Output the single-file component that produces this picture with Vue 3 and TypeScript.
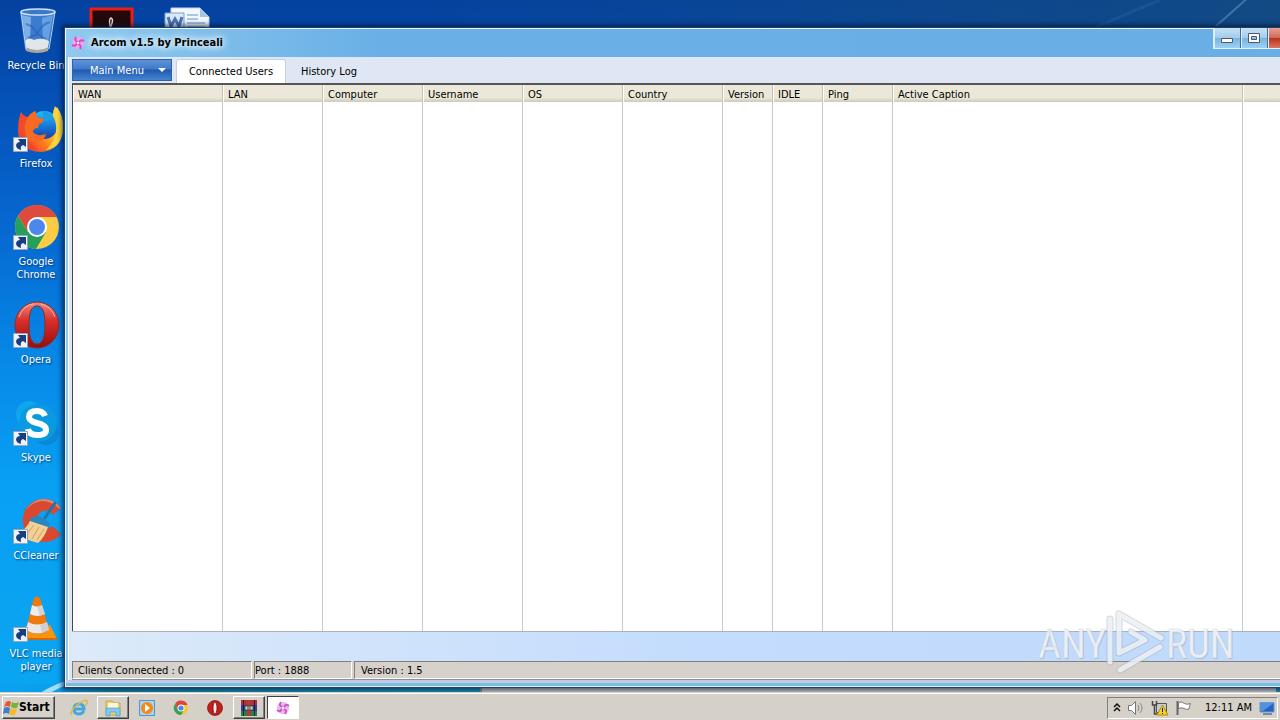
<script setup lang="ts">
import { ref } from 'vue'

interface Column { label: string; size: string }
interface Shortcut { id: string; label: string; linked: boolean }

const shortcuts: Shortcut[] = [
  { id: 'bin', label: 'Recycle Bin', linked: false },
  { id: 'firefox', label: 'Firefox', linked: true },
  { id: 'chrome', label: 'Google Chrome', linked: true },
  { id: 'opera', label: 'Opera', linked: true },
  { id: 'skype', label: 'Skype', linked: true },
  { id: 'ccleaner', label: 'CCleaner', linked: true },
  { id: 'vlc', label: 'VLC media player', linked: true },
]

const columns: Column[] = [
  { label: 'WAN', size: 'c150' },
  { label: 'LAN', size: 'c100' },
  { label: 'Computer', size: 'c100' },
  { label: 'Username', size: 'c100' },
  { label: 'OS', size: 'c100' },
  { label: 'Country', size: 'c100' },
  { label: 'Version', size: 'c50' },
  { label: 'IDLE', size: 'c50' },
  { label: 'Ping', size: 'c70' },
  { label: 'Active Caption', size: 'c350' },
  { label: '', size: 'rest' },
]

const tabs = ['Connected Users', 'History Log']
const activeTab = ref('Connected Users')
</script>

<template>
  <div class="screen">
    <main class="desktop">
      <svg class="streaks" viewBox="0 0 1280 692" preserveAspectRatio="none" aria-hidden="true">
        <path d="M1216 26 L1250 -4" stroke="#5f8fc0" stroke-width="2" opacity=".6" />
        <path d="M1090 30 Q1130 12 1160 0" stroke="#2c68ac" stroke-width="3" opacity=".35" fill="none" />
        <path d="M40 693 Q56 683 70 680 L70 684 Q58 688 50 693Z" fill="#c8efff" opacity=".8" />
      </svg>

      <nav class="icons" aria-label="Desktop">
        <div class="column">
          <button v-for="s in shortcuts" :key="s.id" class="shortcut" type="button">
            <span class="picture">
              <svg v-if="s.id === 'bin'" viewBox="0 0 48 48">
                <path d="M8 6 L43 7 L36 43 Q25 48 13 43Z" fill="#4f8fdc" opacity=".75" />
                <path d="M10 9 L19 11 L18 36 L14 38Z" fill="#a9d2f8" opacity=".6" />
                <path d="M30 12 L41 9 L36 36 L31 36Z" fill="#7db3ee" opacity=".65" />
                <path d="M14 18 Q22 20 25 28 Q30 18 38 16 M16 32 L25 28 L34 33" stroke="#2a61b4" stroke-width="2" fill="none" opacity=".6" />
                <path d="M13 35 Q17 31 22 34 Q29 31 37 35 L36 42 Q25 47 14 42Z" fill="#f2f2ec" opacity=".9" />
                <path d="M13 41 Q25 47 37 41 L36 45 Q25 49 14 45Z" fill="#aaa79c" />
                <ellipse cx="26" cy="6" rx="17" ry="3" fill="#3c78c4" stroke="#cfe2f6" stroke-width="1.500" />
                <path d="M9 6 L14 43 M43 6 L37 43" stroke="#b5d3f4" stroke-width="1" />
              </svg>

              <svg v-else-if="s.id === 'firefox'" viewBox="0 0 48 48">
                <defs>
                  <linearGradient id="ffbody" x1=".9" y1=".1" x2=".1" y2=".8">
                    <stop offset="0" stop-color="#fff04a" /><stop offset=".4" stop-color="#ffc02a" /><stop offset=".68" stop-color="#ff7a1c" /><stop offset="1" stop-color="#f03b30" />
                  </linearGradient>
                  <linearGradient id="ffglobe" x1="0" y1="0" x2="0" y2="1">
                    <stop offset="0" stop-color="#22c1f4" /><stop offset=".6" stop-color="#1670d6" /><stop offset="1" stop-color="#18439f" />
                  </linearGradient>
                </defs>
                <path d="M45 3 Q52 13 51 26 Q49 47 28 48 Q8 47 6 28 Q6 18 9 9 Q11 13 14 13 L38 14 Q42 9 45 3Z" fill="url(#ffbody)" />
                <circle cx="32" cy="21" r="14" fill="url(#ffglobe)" />
                <path d="M30 7 Q37 6 42 14 L33 17Z" fill="#1c9de4" />
                <path d="M43 2 Q52 11 51 26 Q49 43 34 46 Q43 38 44 27 Q45 19 41 12 Q41 6 43 2Z" fill="#ffd43c" />
                <path d="M9 8 Q11 13 16 13 Q19 8 24 7 Q23 12 27 14 L32 15 Q32 18 27 20 L26 24 Q21 24 21 28 Q25 33 34 30 Q33 38 24 37 Q15 37 10 29 Q5 20 9 8Z" fill="#f66a22" />
                <path d="M9 9 Q4 20 8 32 Q13 44 26 46 Q14 37 13 27 Q12 19 16 14Z" fill="#ef4130" opacity=".75" />
              </svg>

              <svg v-else-if="s.id === 'chrome'" viewBox="0 0 48 48">
                <circle cx="25" cy="25" r="22" fill="#fccc44" />
                <path d="M6 14 A22 22 0 0 1 45 15 L25 15 L16 30Z" fill="#dd4b3e" />
                <path d="M6 14 A22 22 0 0 0 24 47 L34 30 L16 30Z" fill="#25a05a" />
                <circle cx="25" cy="25" r="10" fill="#fff" />
                <circle cx="25" cy="25" r="8" fill="#4b87ed" />
              </svg>

              <svg v-else-if="s.id === 'opera'" viewBox="0 0 48 48">
                <defs><linearGradient id="op" x1="0" y1="0" x2="0" y2="1"><stop offset="0" stop-color="#f08a7c" /><stop offset=".4" stop-color="#d92f2c" /><stop offset="1" stop-color="#980c0c" /></linearGradient></defs>
                <path fill-rule="evenodd" d="M25 2 A22 23 0 1 0 25 48 A22 23 0 1 0 25 2Z M25 6 C31 6 33 13 33 25 C33 36 31 44 25 44 C19 44 17 36 17 25 C17 13 19 6 25 6Z" fill="url(#op)" stroke="#8e2a2a" stroke-width="1" />
                <path d="M7 17 Q11 5 22 4 M29 4 Q39 6 43 17" stroke="#f7b3a6" stroke-width="1" fill="none" />
              </svg>

              <svg v-else-if="s.id === 'skype'" viewBox="0 0 48 48">
                <circle cx="17" cy="16" r="13" fill="#10a6ec" />
                <circle cx="34" cy="34" r="13" fill="#0a88d6" />
                <circle cx="26" cy="25" r="19" fill="#0a9ae2" />
                <path d="M33 18 Q31 13 25 13 Q17 13 17 19 Q17 23 25 25 Q34 27 34 32 Q34 37 25 37 Q17 37 16 31" stroke="#fff" stroke-width="6" fill="none" />
              </svg>

              <svg v-else-if="s.id === 'ccleaner'" viewBox="0 0 48 48">
                <path d="M49 12 Q42 3 31 3 Q19 4 13 14 Q8 26 14 36 Q21 46 33 46 Q44 45 49 38 L40 30 Q35 35 29 32 Q23 28 25 21 Q29 13 36 15 Q39 16 41 19Z" fill="#d9492f" />
                <path d="M31 3 Q42 3 49 12 L47 13 Q40 5 30 5 Q20 6 14 14 Q20 4 31 3Z" fill="#ee8266" />
                <path d="M30 26 L43 7" stroke="#1f76ad" stroke-width="3" stroke-linecap="round" />
                <path d="M19 22 Q25 18 33 23 L38 28 L36 32 L17 26Z" fill="#2b86bd" />
                <path d="M18 25 L36 31 Q33 41 26 47 Q13 44 5 37 Q14 34 18 25Z" fill="#f3cf98" />
                <path d="M22 29 L14 39 M27 31 L20 43 M32 33 L25 44" stroke="#d59c5c" stroke-width="1" />
              </svg>

              <svg v-else viewBox="0 0 48 48">
                <path d="M14 32 L38 31 L45 45 L8 45Z" fill="#f7940f" />
                <path d="M8 44 L45 44 L45 46 L8 46Z" fill="#dc6805" />
                <path d="M22 4 Q25 1 28 4 L37 36 Q25 44 14 36Z" fill="#f27a0c" />
                <path d="M20 11 Q25 14 30 11 L33 20 Q25 24 18 20Z" fill="#ededed" />
                <path d="M16 28 Q25 33 35 28 L37 36 Q25 43 14 36Z" fill="#e8e8e8" />
                <path d="M25 12 L30 11 L33 20 L28 22Z M28 31 L35 28 L37 36 L30 39Z" fill="#bfc0c3" opacity=".6" />
              </svg>
              <svg v-if="s.linked" class="link-mark" viewBox="0 0 15 15" aria-hidden="true">
                <path d="M.5 .5h14v14H.5z" fill="#eef2fa" stroke="#9aa4b8" />
                <path d="M5 2h8v8l-3-2Q7 9 8 13Q3 12 3 8Q4 5 7 5Z" fill="#173f80" />
              </svg>
            </span>
            <span class="caption">{{ s.label }}</span>
          </button>
        </div>
        <div class="column">
          <button class="shortcut" type="button" aria-label="Acrobat Reader">
            <span class="picture">
              <svg viewBox="0 0 48 48"><path d="M4 3h41v44H4z" fill="#23090b" stroke="#ee1c12" stroke-width="3" /><path d="M24 24 Q21 13 24 12 Q27 13 24 20 Q20 28 14 32" stroke="#e8d8d8" stroke-width="1.500" fill="none" /></svg>
            </span>
          </button>
        </div>
        <div class="column">
          <button class="shortcut" type="button" aria-label="Document">
            <span class="picture">
              <svg viewBox="0 0 48 48"><path d="M9 2h29l9 9v37H9z" fill="#f4f8fd" stroke="#c3d4e8" /><path d="M38 2v9h9z" fill="#a9c4e3" /><path d="M25 9h11M25 13h11M25 17h18M25 21h18" stroke="#a9c6e8" stroke-width="2" /><path d="M3 7h19v18H3z" fill="#dce8f7" stroke="#7fa2d0" /><path d="M6 11l3 9 4-7 4 7 3-9" fill="none" stroke="#4a74b4" stroke-width="3" /></svg>
            </span>
          </button>
        </div>
      </nav>

      <div class="behind" aria-hidden="true"></div>

      <section class="window" aria-label="Arcom">
        <header class="titlebar">
          <svg class="app-icon" viewBox="0 0 14 14" aria-hidden="true">
            <circle cx="7" cy="7" r="6" fill="#f7a6ea" opacity=".75" />
            <path d="M7 6Q3 5 5 1M8 7Q9 3 13 5M7 8Q11 9 9 13M6 7Q5 11 1 9" fill="none" stroke="#ea3fc9" stroke-width="2" />
            <circle cx="7" cy="7" r="1.300" fill="#fff" />
          </svg>
          <h1>Arcom v1.5 by Princeali</h1>
          <div class="controls">
            <button type="button" class="min" aria-label="Minimize"><svg viewBox="0 0 14 14"><path d="M1.500 7.500h11v4h-11z" fill="#fff" stroke="#4b5872" /></svg></button>
            <button type="button" class="max" aria-label="Maximize"><svg viewBox="0 0 14 14"><path fill-rule="evenodd" d="M1.500 2.500h11v9h-11z M4.500 5.500v3h5v-3z" fill="#fff" stroke="#4b5872" /></svg></button>
            <button type="button" class="close" aria-label="Close"><svg viewBox="0 0 14 14"><path d="M3 3l8 8M11 3l-8 8" stroke="#fff" stroke-width="3" /></svg></button>
          </div>
        </header>

        <div class="client">
          <div class="toolbar">
            <button type="button" class="menu"><span>Main Menu</span><svg viewBox="0 0 8 4" aria-hidden="true"><path d="M0 0h8L4 4z" fill="#fff" /></svg></button>
            <div class="tabs" role="tablist">
              <button v-for="t in tabs" :key="t" type="button" role="tab" class="tab" :class="{ active: t === activeTab }" :aria-selected="t === activeTab" @click="activeTab = t">{{ t }}</button>
            </div>
          </div>

          <div class="list">
            <table>
              <colgroup><col v-for="(c, i) in columns" :key="i" :class="c.size" /></colgroup>
              <thead><tr><th v-for="(c, i) in columns" :key="i" scope="col">{{ c.label }}</th></tr></thead>
              <tbody><tr><td v-for="(c, i) in columns" :key="i"></td></tr></tbody>
            </table>
          </div>

          <div class="strip"></div>
          <footer class="status">
            <span class="clients">Clients Connected : 0</span>
            <span class="port">Port : 1888</span>
            <span class="version">Version : 1.5</span>
          </footer>
        </div>
      </section>

      <svg class="watermark" viewBox="0 0 200 64" aria-label="ANY RUN">
        <g class="wm-back"><text x="3" y="49">ANY</text><text x="131" y="49">RUN</text></g>
        <g class="wm-front"><text x="2" y="48">ANY</text><text x="130" y="48">RUN</text></g>
        <g fill="none" stroke-linejoin="round" stroke-linecap="round">
          <path d="M83 4L125 28M83 4V43L109 30L95 22M74 9V52M84 60L124 37" stroke="#9da8b8" stroke-opacity=".45" stroke-width="7" />
          <path d="M83 4L125 28M83 4V43L109 30L95 22M74 9V52M84 60L124 37" stroke="#f7f9fc" stroke-opacity=".75" stroke-width="5" />
        </g>
      </svg>
    </main>

    <footer class="taskbar">
      <button type="button" class="start">
        <svg viewBox="0 0 16 16" aria-hidden="true"><path d="M3 2Q6 0 8 2L7 7Q4 5 1 7Z" fill="#e9572c" /><path d="M9 2Q12 4 16 2L14 8Q11 9 8 7Z" fill="#76b63a" /><path d="M1 8Q4 6 7 8L6 14Q3 12 0 14Z" fill="#3b7fd4" /><path d="M8 8Q11 10 14 9L12 15Q9 16 6 14Z" fill="#f5b92b" /></svg>
        <span>Start</span>
      </button>
      <div class="tasks">
        <button type="button" class="task" aria-label="Internet Explorer">
          <svg viewBox="0 0 18 18"><path d="M14 12Q12 15 9 15Q4 15 4 10Q4 5 9 5Q14 5 14 10H5" fill="none" stroke="#43a7e4" stroke-width="3" /><path d="M2 16Q-1 13 7 6Q15 0 17 2Q18 4 15 7" fill="none" stroke="#e2b93b" stroke-width="1.500" /></svg>
        </button>
        <button type="button" class="task raised" aria-label="Explorer">
          <svg viewBox="0 0 18 18"><path d="M2 2h6l2 2h6v12H2z" fill="#ecd17b" stroke="#c9a64d" /><path d="M4 4h10v5H4z" fill="#fdf7d8" /><path d="M2 9h14v8h-4v-4H6v4H2z" fill="#80c8ee" stroke="#4c99c7" stroke-width=".6" /></svg>
        </button>
        <button type="button" class="task" aria-label="Media Player">
          <svg viewBox="0 0 18 18"><path d="M1.500 1.500h15v15h-15z" fill="#a9d3f1" stroke="#5096d2" /><circle cx="9" cy="9" r="6" fill="#f38a18" /><path d="M7 5l5 4-5 4z" fill="#fff" /></svg>
        </button>
        <button type="button" class="task" aria-label="Chrome">
          <svg viewBox="0 0 18 18"><circle cx="9" cy="9" r="7" fill="#f7c832" /><path d="M3 5A7 7 0 0 1 15.500 6H9L6 11Z" fill="#dc4636" /><path d="M3 5A7 7 0 0 0 9 16L12 11H6Z" fill="#35a25a" /><circle cx="9" cy="9" r="3.500" fill="#fff" /><circle cx="9" cy="9" r="2.600" fill="#4c86e6" /></svg>
        </button>
        <button type="button" class="task" aria-label="Opera">
          <svg viewBox="0 0 18 18"><circle cx="9" cy="9" r="7.500" fill="#c51c1c" stroke="#761010" stroke-width=".7" /><ellipse cx="9" cy="9" rx="2" ry="6" fill="#f5e9e5" stroke="#6d0b0b" stroke-width=".8" /></svg>
        </button>
        <button type="button" class="task raised" aria-label="WinRAR">
          <svg viewBox="0 0 18 18"><path d="M1 1h16v5H1z" fill="#b52c3d" /><path d="M1 6h16v6H1z" fill="#303f9b" /><path d="M1 12h16v5H1z" fill="#27804c" /><path d="M7 1h4v16H7z" fill="#a8402d" /><path d="M5 7h8v4H5z" fill="#dcd6c2" stroke="#333" stroke-width=".7" /><path d="M8 7v4M10 7v4" stroke="#444" /><path d="M3.500 1v16M14.500 1v16" stroke="#151530" stroke-width=".8" /></svg>
        </button>
        <button type="button" class="task pressed" aria-label="Arcom">
          <svg viewBox="0 0 18 18"><circle cx="9" cy="9" r="6" fill="#f0b4ec" /><path d="M9 8Q4 7 7 3M10 9Q11 4 15 7M9 10Q14 11 11 15M8 9Q7 14 3 11" fill="none" stroke="#cf55cb" stroke-width="2" /><circle cx="9" cy="9" r="1.500" fill="#fff" /></svg>
        </button>
      </div>
      <div class="tray">
        <button type="button" aria-label="Show hidden icons"><svg class="chev" viewBox="0 0 8 10"><path d="M1 4l3-3 3 3M1 8l3-3 3 3" fill="none" stroke="#111" stroke-width="1.500" /></svg></button>
        <button type="button" aria-label="Volume"><svg viewBox="0 0 18 16"><path d="M1.500 5.500h3l4-4v13l-4-4h-3z" fill="#fff" stroke="#777" /><path d="M11 5q2 3 0 6M13 3q4 5 0 10" fill="none" stroke="#888" /></svg></button>
        <button type="button" aria-label="Network"><svg viewBox="0 0 18 16"><path d="M5.500 3.500h10v9h-10z" fill="#c7ccd2" stroke="#555" /><path d="M1.500 1v4h4V1M3.500 5v9h3" fill="none" stroke="#444" stroke-width="1.500" /><path d="M11.500 5l5.500 10H6z" fill="#f8d21c" stroke="#b18d08" /><path d="M11.500 8v4M11.500 13v1" stroke="#222" /></svg></button>
        <button type="button" aria-label="Action Center"><svg viewBox="0 0 18 16"><path d="M2.500 1v14" stroke="#666" stroke-width="2" /><path d="M3.500 2.500Q7 1 9.500 3.500Q12 5 15.500 3.500Q14 7 14 9Q11 10 9 8.500Q6 7 3.500 8.500z" fill="#fff" stroke="#777" /></svg></button>
        <time>12:11 AM</time>
        <button type="button" aria-label="Show desktop"><svg viewBox="0 0 18 16"><path d="M2 2.500h14v9.500H2z" fill="#2664bf" stroke="#6897d5" /><path d="M2 3L16 3L5 11H2z" fill="#5590dd" /><path d="M5 14h9" stroke="#1f4381" stroke-width="1" /></svg></button>
      </div>
    </footer>
  </div>
</template>

<style>
html, body { margin: 0; overflow: hidden; }
</style>

<style scoped>
.screen {
  display: flex;
  flex-direction: column;
  height: 100vh;
  overflow: hidden;
  font-family: "DejaVu Sans Condensed", "Liberation Sans", sans-serif;
  font-size: 11px;
  line-height: 13px;
  color: #000;
}
button { font: inherit; color: inherit; padding: 0; border: 0; background: none; }
svg { display: block; }

.desktop {
  position: relative;
  flex: 1;
  min-height: 0;
  overflow: hidden;
  background:
    linear-gradient(90deg, rgba(8, 60, 130, 0) 30%, #124a84 100%) top / 100% 40px no-repeat,
    linear-gradient(90deg, #0aa2ef 0, #0a9ee8 60px, #1683a6 110px, #1f93b4 480px) bottom / 100% 8px no-repeat,
    linear-gradient(180deg, #04419f 0, #0552b8 15%, #066bd3 35%, #078ae8 53%, #08a0f3 70%, #0aa5f2 100%);
}
.streaks { position: absolute; inset: 0; width: 100%; height: 100%; }
.icons { position: relative; display: flex; gap: 3px; }
.column { width: 72px; }
.shortcut {
  display: flex;
  flex-direction: column;
  align-items: center;
  width: 72px;
  height: 98px;
  padding-top: 6px;
  color: #fff;
  text-shadow: 1px 1px 2px #02346f;
}
.picture { position: relative; width: 48px; height: 48px; flex: none; }
.picture > svg { width: 48px; height: 48px; overflow: visible; }
.picture > .link-mark { position: absolute; left: 1px; bottom: 0; width: 15px; height: 15px; }
.caption { margin-top: 5px; width: 60px; text-align: center; }
.column:first-child .shortcut:first-child .caption { width: auto; white-space: nowrap; }

.behind {
  position: absolute;
  left: 480px;
  right: 4px;
  bottom: 0;
  height: 24px;
  border-left: 2px solid #8b8f8c;
  background: #c9c7c0;
}

.window {
  position: absolute;
  left: 64px;
  top: 27px;
  right: -40px;
  bottom: 4px;
  display: flex;
  flex-direction: column;
  box-sizing: border-box;
  border: 1px solid #24425e;
  padding: 0 3px 7px;
  background:
    linear-gradient(#c3cbe2 0 3px, #7cbbe6 3px 6px, #dff1fb 6px) bottom / 100% 7px no-repeat,
    linear-gradient(90deg, #8fc9ef 0, #6ab0e6 25%, #69afe6 100%);
  box-shadow: inset 1px 1px 0 #e9f6ff, 0 0 5px 2px rgba(0, 18, 50, .7);
}
.titlebar { display: flex; align-items: flex-start; height: 29px; flex: none; padding: 0 3px; }
.app-icon { width: 14px; height: 14px; margin-top: 8px; }
h1 {
  margin: 8px 0 0 6px;
  font-size: 11px;
  line-height: 14px;
  font-weight: bold;
  text-shadow: 0 0 6px #fff, 0 0 8px #d8efff, 0 0 10px #d8efff;
}
.controls {
  display: flex;
  margin-left: auto;
  height: 20px;
  border: 1px solid #e2f2fd;
  border-top: 0;
}
.controls button {
  display: flex;
  align-items: center;
  justify-content: center;
  width: 27px;
  border-right: 1px solid #47708f;
  background: linear-gradient(#c4e1f6 0, #a4cdec 48%, #78b4e0 50%, #9bd0f1 100%);
  box-shadow: inset 1px 0 0 #d9eefb;
}
.controls .close { width: 44px; background: linear-gradient(#e5a196 0, #d06957 48%, #b72f1e 50%, #da765c 100%); }
.controls svg { width: 14px; height: 14px; }

.client {
  flex: 1;
  min-height: 0;
  display: flex;
  flex-direction: column;
  padding-left: 3px;
  background: #dfe7f5;
  border-left: 1px solid #f8fcff;
}
.toolbar { display: flex; height: 26px; flex: none; box-sizing: border-box; padding-top: 2px; }
.menu {
  display: flex;
  align-items: center;
  justify-content: space-between;
  width: 100px;
  height: 22px;
  padding: 0 5px 0 17px;
  color: #fff;
  border: 1px solid #2d62ac;
  background: linear-gradient(#5f93d8 0, #3f79c8 45%, #2159ae 50%, #4384d2 100%);
}
.menu svg { width: 8px; height: 4px; }
.tabs { display: flex; margin-left: 4px; }
.tab { height: 24px; padding: 0 15px; }
.tab.active {
  width: 110px;
  padding: 0;
  background: #fff;
  border: 1px solid #c4d0e2;
  border-bottom: 0;
  border-radius: 3px 3px 0 0;
}

.list {
  flex: 1;
  min-height: 0;
  border: solid #45454a;
  border-width: 2px 0 0 1px;
  border-top-color: #55555a;
  background: #fff;
}
table { width: 100%; height: 100%; table-layout: fixed; border-collapse: separate; border-spacing: 0; }
.c150 { width: 150px; }
.c100 { width: 100px; }
.c50 { width: 50px; }
.c70 { width: 70px; }
.c350 { width: 350px; }
th {
  height: 17px;
  box-sizing: border-box;
  padding: 1px 0 0 5px;
  text-align: left;
  font-weight: normal;
  white-space: nowrap;
  background: linear-gradient(90deg, #fff 0 1px, transparent 1px), linear-gradient(#ebe8d9 0, #ebe8d9 13px, #d3cfbf 16px);
  border-right: 1px solid #c6c2b1;
}
td { padding: 0; border-right: 1px solid #c9c9c9; }

.strip { height: 30px; flex: none; box-sizing: border-box; border-top: 1px solid #aab2bd; background: linear-gradient(90deg, #dceaf9 0, #c4dcfd 50%, #c0dafc 100%); }
.status { display: flex; gap: 2px; height: 18px; flex: none; background: #d6d1ca; border-bottom: 1px solid #8b8f98; }
.status span {
  box-sizing: border-box;
  padding-top: 2px;
  border: 1px solid;
  border-color: #808080 #fff #fff #808080;
  white-space: nowrap;
}
.clients { width: 180px; padding-left: 5px; }
.port { width: 98px; }
.version { flex: 1; padding-left: 6px; }

.watermark { position: absolute; right: 44px; bottom: 18px; width: 200px; height: 64px; pointer-events: none; overflow: visible; }
.watermark text { font-family: "Roboto Condensed", "Liberation Sans Narrow", Roboto, sans-serif; font-size: 40px; }
.wm-back { fill: #8d98a8; fill-opacity: .45; }
.wm-front { fill: #f7f9fc; fill-opacity: .85; stroke: #c3cad4; stroke-opacity: .4; }

.taskbar {
  display: flex;
  align-items: center;
  flex: none;
  height: 28px;
  box-sizing: border-box;
  padding: 2px 2px 0;
  background: #d5d0c8;
  border-top: 1px solid #d5d0c8;
  box-shadow: inset 0 1px 0 #fff;
}
.start, .raised {
  border: 1px solid;
  border-color: #fff #404040 #404040 #fff;
  box-shadow: inset -1px -1px 0 #808080;
}
.start { display: flex; align-items: center; width: 53px; height: 23px; font-size: 12px; font-weight: bold; }
.start svg { width: 16px; height: 16px; flex: none; }
.tasks { display: flex; gap: 2px; margin-left: 8px; }
.task { display: flex; align-items: center; justify-content: center; box-sizing: border-box; width: 32px; height: 23px; }
.task svg { width: 18px; height: 18px; }
.pressed { background: #fff; border: 1px solid; border-color: #404040 #fff #fff #404040; }
.tray {
  display: flex;
  align-items: center;
  gap: 6px;
  margin-left: auto;
  height: 20px;
  padding: 0 1px 0 5px;
  border: 1px solid;
  border-color: #808080 #fff #fff #808080;
}
.tray svg { width: 18px; height: 16px; }
.tray .chev { width: 8px; height: 10px; }
.tray time { margin-left: 6px; white-space: nowrap; }
</style>
